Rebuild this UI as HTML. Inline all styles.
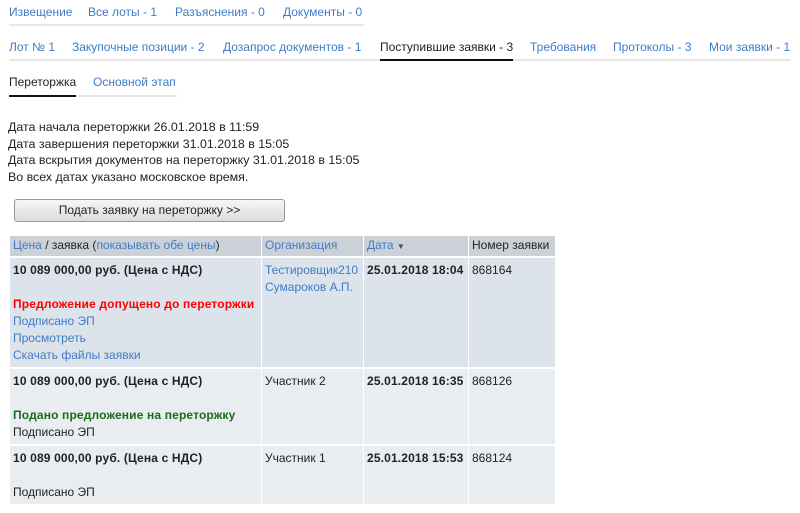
<!DOCTYPE html>
<html><head><meta charset="utf-8"><style>
body{margin:0;background:#fff;font-family:"Liberation Sans",Arial,sans-serif;color:#222;width:800px;height:513px;overflow:hidden;position:relative}
a,.l{color:#3f7cc5;text-decoration:none}
.t{position:absolute;font-size:12px;white-space:nowrap;line-height:16px}
.line{position:absolute;height:2px;background:#e8e8e8}
.act{position:absolute;height:2px;background:#111}
.info{position:absolute;left:8px;top:119px;font-size:12.4px;line-height:16.7px}
.btn{position:absolute;left:14px;top:199px;width:269px;height:21px;border:1px solid #999;border-radius:3px;background:linear-gradient(#f6f6f6,#dcdcdc);font-size:12px;text-align:center;line-height:21px;color:#222}
table{position:absolute;left:10px;top:236px;border-collapse:collapse;font-size:12px;width:545px}
td,th{border:1px solid #fff;border-top:none;border-bottom:2px solid #fff;vertical-align:top;padding:4px 3px 3px;line-height:17px;text-align:left;font-weight:normal}
th{background:#ccd1d8;height:15px;padding:2px 3px 2px;line-height:15px}
tr.r1 td{background:#dde3ea}
tr.r2 td{background:#eaedf0}
td:first-child,th:first-child{border-left:none}
td:last-child,th:last-child{border-right:none}
b{font-weight:bold;font-size:12px;letter-spacing:0.15px}
</style></head><body>
<div class="t l" style="left:9px;top:4px">Извещение</div>
<div class="t l" style="left:88px;top:4px">Все лоты - 1</div>
<div class="t l" style="left:175px;top:4px">Разъяснения - 0</div>
<div class="t l" style="left:283px;top:4px">Документы - 0</div>
<div class="line" style="left:9px;top:24px;width:355px"></div>

<div class="t l" style="left:9px;top:39px">Лот № 1</div>
<div class="t l" style="left:72px;top:39px">Закупочные позиции - 2</div>
<div class="t l" style="left:223px;top:39px">Дозапрос документов - 1</div>
<div class="t" style="left:380px;top:39px;color:#222">Поступившие заявки - 3</div>
<div class="t l" style="left:530px;top:39px">Требования</div>
<div class="t l" style="left:613px;top:39px">Протоколы - 3</div>
<div class="t l" style="left:709px;top:39px">Мои заявки - 1</div>
<div class="line" style="left:9px;top:59px;width:782px"></div>
<div class="act" style="left:380px;top:59px;width:133px"></div>

<div class="t" style="left:9px;top:74px;color:#222">Переторжка</div>
<div class="t l" style="left:93px;top:74px">Основной этап</div>
<div class="line" style="left:9px;top:95px;width:168px"></div>
<div class="act" style="left:9px;top:95px;width:67px"></div>

<div class="info">Дата начала переторжки 26.01.2018 в 11:59<br>Дата завершения переторжки 31.01.2018 в 15:05<br>Дата вскрытия документов на переторжку 31.01.2018 в 15:05<br>Во всех датах указано московское время.</div>

<div class="btn">Подать заявку на переторжку &gt;&gt;</div>

<table>
<tr><th style="width:245px"><span class="l">Цена</span> / заявка (<span class="l">показывать обе цены</span>)</th><th style="width:95px"><span class="l">Организация</span></th><th style="width:98px"><span class="l">Дата</span> <span style="font-size:8px;color:#356">▼</span></th><th>Номер заявки</th></tr>
<tr class="r1"><td><b>10 089 000,00 руб. (Цена с НДС)</b><br>&nbsp;<br><b style="color:#f00">Предложение допущено до переторжки</b><br><span class="l">Подписано ЭП</span><br><span class="l">Просмотреть</span><br><span class="l">Скачать файлы заявки</span></td><td><span class="l">Тестировщик210<br>Сумароков А.П.</span></td><td><b>25.01.2018 18:04</b></td><td>868164</td></tr>
<tr class="r2"><td><b>10 089 000,00 руб. (Цена с НДС)</b><br>&nbsp;<br><b style="color:#1a6b1a">Подано предложение на переторжку</b><br>Подписано ЭП</td><td>Участник 2</td><td><b>25.01.2018 16:35</b></td><td>868126</td></tr>
<tr class="r2"><td><b>10 089 000,00 руб. (Цена с НДС)</b><br>&nbsp;<br>Подписано ЭП</td><td>Участник 1</td><td><b>25.01.2018 15:53</b></td><td>868124</td></tr>
</table>
</body></html>
